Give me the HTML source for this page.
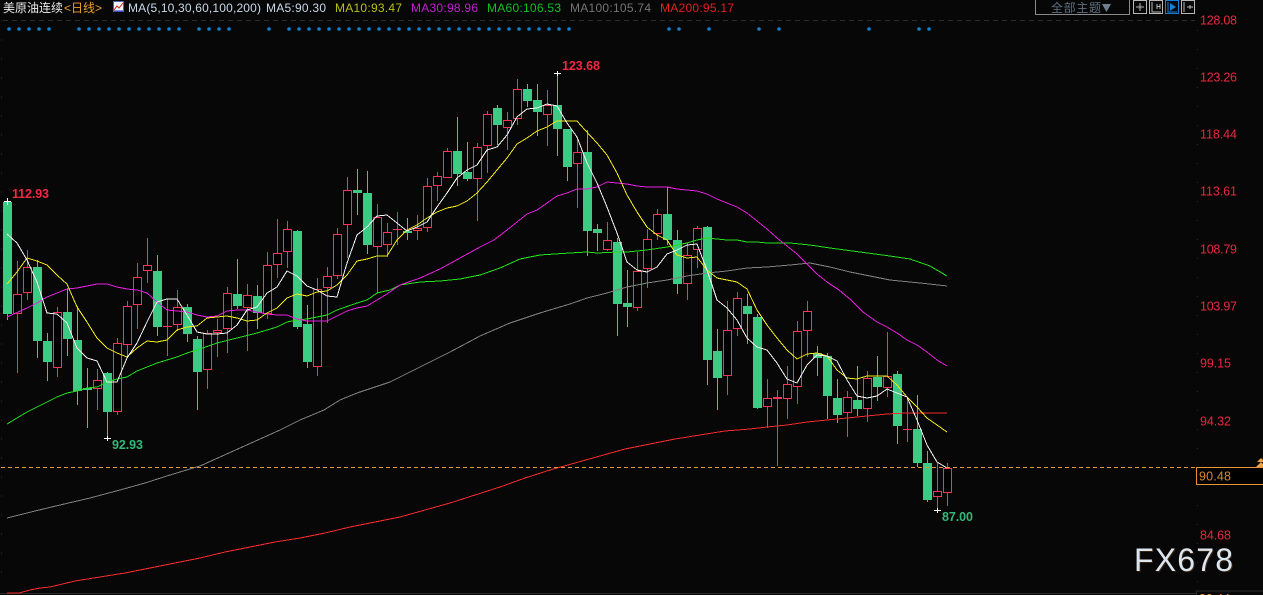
<!DOCTYPE html>
<html><head><meta charset="utf-8"><title>美原油连续</title>
<style>
html,body{margin:0;padding:0;background:#070707;width:1263px;height:595px;overflow:hidden}
svg{display:block;position:absolute;left:0;top:0}
text{font-family:"Liberation Sans","Noto Sans CJK SC",sans-serif}
polyline{shape-rendering:crispEdges}
</style></head><body>
<svg width="1263" height="595" viewBox="0 0 1263 595" xmlns="http://www.w3.org/2000/svg">
<rect width="1263" height="595" fill="#070707"/>
<!-- grid -->
<path d="M3 20.5H1195" stroke="#2c2c2c" stroke-dasharray="5 4" fill="none"/>
<path d="M1197.5 30V590" stroke="#2a2a2a" stroke-dasharray="1 18" fill="none"/>
<path d="M0 593.5H1196M1196.5 595V591H1263" stroke="#2b2b2b" fill="none"/>
<path d="M1.5 20V590" stroke="#1c1c1c" stroke-dasharray="2 17" fill="none"/>
<!-- signal dots -->
<path stroke="#1180d0" stroke-width="3.6" stroke-linecap="round" fill="none" d="M9 29h0M19 29h0M29 29h0M39 29h0M49 29h0M79 29h0M89 29h0M99 29h0M109 29h0M119 29h0M129 29h0M139 29h0M149 29h0M159 29h0M169 29h0M179 29h0M199 29h0M209 29h0M219 29h0M229 29h0M269 29h0M289 29h0M299 29h0M309 29h0M319 29h0M329 29h0M339 29h0M349 29h0M359 29h0M369 29h0M379 29h0M389 29h0M399 29h0M409 29h0M419 29h0M429 29h0M439 29h0M449 29h0M459 29h0M469 29h0M479 29h0M489 29h0M499 29h0M509 29h0M519 29h0M529 29h0M539 29h0M549 29h0M559 29h0M569 29h0M669 29h0M679 29h0M709 29h0M759 29h0M779 29h0M869 29h0M919 29h0M929 29h0"/>
<!-- green wicks -->
<path fill="none" stroke="#3bcb82" d="M7.5 201V320M37.5 260V358M47.5 333V381M67.5 288V356M77.5 306V405M87.5 368V428M107.5 372V437M157.5 255V336M187.5 304V342M197.5 336V410M237.5 259V309M257.5 285V329M297.5 230V329M307.5 305V368M357.5 169V215M367.5 171V254M407.5 218V240M457.5 117V186M467.5 142V181M497.5 105V145M527.5 84V107M537.5 84V136M557.5 73V156M567.5 129V181M587.5 130V256M597.5 224V251M617.5 238V336M627.5 270V327M667.5 187V245M677.5 230V294M707.5 226V385M717.5 329V410M747.5 294V344M757.5 314V409M817.5 346V376M827.5 353V419M837.5 379V423M857.5 366V416M877.5 356V401M897.5 371V444M917.5 395V467M927.5 451V502"/>
<!-- green bodies -->
<path fill="none" stroke="#3bcb82" stroke-width="9" d="M7.5 202V314M37.5 267V341M47.5 341V362M67.5 312V339M77.5 340V391M87.5 388V390M107.5 373V412M157.5 271V327M187.5 307V334M197.5 339V372M237.5 294V306M257.5 296V313M297.5 231V327M307.5 324V362M357.5 190V193M367.5 193V245M407.5 231V233M457.5 151V174M467.5 172V179M497.5 108V125M527.5 89V101M537.5 100V112M557.5 105V129M567.5 129V167M587.5 152V231M597.5 229V233M617.5 242V304M627.5 303V307M667.5 214V240M677.5 240V284M707.5 227V360M717.5 351V378M747.5 306V314M757.5 317V408M817.5 353V358M827.5 356V396M837.5 398V415M857.5 400V409M877.5 377V387M897.5 374V426M917.5 429V463M927.5 463V500"/>
<!-- red wicks -->
<path fill="none" stroke="#ff3352" d="M17.5 261V373M27.5 250V300M57.5 307V377M97.5 369V410M117.5 338V415M127.5 301V357M137.5 263V329M147.5 238V283M167.5 299V356M177.5 290V331M207.5 330V389M217.5 319V357M227.5 287V353M247.5 284V351M267.5 252V319M277.5 219V278M287.5 221V268M317.5 278V376M327.5 267V323M337.5 228V279M347.5 177V258M377.5 204V293M387.5 223V257M397.5 212V245M417.5 215V240M427.5 178V232M437.5 172V201M447.5 148V178M477.5 143V221M487.5 111V173M507.5 112V150M517.5 79V125M547.5 90V146M577.5 139V208M607.5 222V251M637.5 252V311M647.5 229V288M657.5 209V240M687.5 243V300M697.5 226V268M727.5 301V395M737.5 292V336M767.5 379V428M777.5 390V466M787.5 366V419M797.5 321V404M807.5 301V357M847.5 391V437M867.5 371V422M887.5 332V397M907.5 397V442M937.5 463V509M947.5 463V506"/>
<!-- red bodies outer -->
<path fill="none" stroke="#ff3352" stroke-width="9" d="M17.5 294V314M27.5 267V293M57.5 312V368M97.5 380V389M117.5 343V412M127.5 306V345M137.5 277V305M147.5 265V271M167.5 326V327M177.5 307V325M207.5 333V370M217.5 330V333M227.5 293V329M247.5 295V308M267.5 265V314M277.5 253V265M287.5 229V252M317.5 289V367M327.5 276V288M337.5 234V276M347.5 190V225M377.5 217V247M387.5 232V245M397.5 229V230M417.5 228V231M427.5 186V228M437.5 176V186M447.5 151V178M477.5 147V179M487.5 114V146M507.5 120V128M517.5 89V119M547.5 105V115M577.5 152V164M607.5 240V250M637.5 271V308M647.5 239V269M657.5 214V234M687.5 255V284M697.5 228V250M727.5 330V376M737.5 298V329M767.5 398V407M777.5 397V399M787.5 384V399M797.5 331V387M807.5 311V331M847.5 397V413M867.5 378V409M887.5 376V388M907.5 429V430M937.5 491V497M947.5 468V493"/>
<!-- red bodies hollow -->
<path fill="none" stroke="#000" stroke-width="7" d="M17.5 295V313M27.5 268V292M57.5 313V367M97.5 381V388M117.5 344V411M127.5 307V344M137.5 278V304M147.5 266V270M177.5 308V324M207.5 334V369M217.5 331V332M227.5 294V328M247.5 296V307M267.5 266V313M277.5 254V264M287.5 230V251M317.5 290V366M327.5 277V287M337.5 235V275M347.5 191V224M377.5 218V246M387.5 233V244M417.5 229V230M427.5 187V227M437.5 177V185M447.5 152V177M477.5 148V178M487.5 115V145M507.5 121V127M517.5 90V118M547.5 106V114M577.5 153V163M607.5 241V249M637.5 272V307M647.5 240V268M657.5 215V233M687.5 256V283M697.5 229V249M727.5 331V375M737.5 299V328M767.5 399V406M787.5 385V398M797.5 332V386M807.5 312V330M847.5 398V412M867.5 379V408M887.5 377V387M937.5 492V496M947.5 469V492"/>
<!-- MA200 -->
<polyline fill="none" stroke="#f52a2a" stroke-width="1" points="7,593 19,593 30,590 40,588 50,587 75,581 100,577 125,573 150,568 175,563 200,558 225,552 250,547 275,542 300,538 325,533 350,527 375,522 400,517 425,510 450,503 475,495 500,487 525,478 550,470 575,463 600,456 625,449 650,444 675,439 700,435 725,431 750,429 767,427 787,425 807,422 827,420 847,418 867,416 887,414 907,413 947,413"/>
<!-- MA100 -->
<polyline fill="none" stroke="#808080" stroke-width="1" points="7,518 35,511 60,505 90,498 120,490 145,483 170,475 200,466 220,457 240,448 260,439 280,430 300,420 324,410 340,400 357,393 390,382 420,367 450,352 480,336 510,323 540,313 570,304 587,298 607,293 627,287 647,283 667,280 687,276 707,273 727,271 747,268 767,267 790,265 810,263 830,267 850,272 870,276 890,280 920,283 947,286"/>
<!-- MA60 -->
<polyline fill="none" stroke="#22e018" stroke-width="1" points="7,424 17,418 27,412 37,407 47,402 57,397 67,393 77,391 87,388 97,387 107,382 117,379 127,377 137,371 147,367 157,363 167,360 177,357 187,353 197,350 217,343 237,338 257,333 277,327 287,322 297,320 307,319 317,317 327,315 337,310 357,303 367,300 377,293 390,290 400,285 420,282 440,281 460,279 480,275 500,268 520,259 540,255 570,253 587,252 597,253 617,252 627,252 647,250 667,247 687,243 697,240 707,238 717,239 727,240 737,240 747,242 757,242 767,243 790,243 810,245 830,248 860,252 890,256 910,259 930,266 947,276"/>
<!-- MA30 -->
<polyline fill="none" stroke="#e81ee0" stroke-width="1" points="7,317 27,308 37,303 47,297 57,293 67,289 77,288 87,286 97,284 107,284 117,287 127,289 137,290 147,293 157,302 167,310 177,311 187,312 197,315 207,317 217,316 227,311 237,310 247,310 257,312 267,314 277,315 287,315 297,319 307,321 317,321 327,321 337,316 347,311 357,308 367,306 377,300 387,294 400,285 420,278 440,269 460,258 480,247 494,240 507,230 517,222 527,214 537,210 547,203 557,196 567,193 577,189 587,189 597,187 607,182 617,183 627,184 637,186 647,187 667,187 677,189 687,190 697,191 707,194 717,199 727,203 737,207 747,213 757,221 767,229 777,238 787,246 797,254 807,264 817,274 827,282 839,290 851,300 863,312 877,322 887,327 897,333 907,340 917,345 927,352 937,360 947,366"/>
<!-- MA10 -->
<polyline fill="none" stroke="#f0e818" stroke-width="1" points="7,284 17,272 27,258 37,261 47,265 57,275 67,284 77,307 87,322 97,338 107,348 117,353 127,357 137,348 147,341 157,342 167,340 177,330 187,327 197,326 207,318 217,317 227,316 237,318 247,321 257,320 267,313 277,308 287,298 297,294 307,296 317,292 327,291 337,285 347,275 357,261 367,259 377,256 387,256 397,240 407,230 417,225 427,218 437,212 447,208 457,206 467,201 477,193 487,182 497,170 507,158 517,144 527,138 537,131 547,127 557,121 567,121 577,121 585,130 597,143 607,155 617,173 627,195 637,212 647,227 657,235 667,240 677,255 687,258 697,257 707,270 717,278 727,280 737,282 747,289 757,310 767,325 777,338 787,350 797,359 807,354 817,353 827,356 837,370 847,378 857,379 867,376 877,376 887,376 897,385 907,397 917,407 927,418 937,425 947,432"/>
<!-- MA5 -->
<polyline fill="none" stroke="#f4f4f4" stroke-width="1" points="7,234 17,243 27,260 37,282 47,313 57,314 67,323 77,348 87,358 97,361 107,382 117,382 127,358 137,343 147,322 157,302 167,299 177,299 187,315 197,332 207,334 217,334 227,333 237,325 247,310 257,307 267,293 277,287 287,271 297,276 307,286 317,290 327,296 337,297 347,263 357,235 367,227 377,216 387,215 397,223 407,231 417,227 427,222 437,207 447,193 457,178 467,170 477,165 487,150 497,147 507,135 517,117 527,109 537,108 547,104 557,106 567,123 577,137 587,163 597,183 607,207 617,233 627,262 637,270 647,272 657,267 667,254 677,250 687,245 697,244 707,270 717,300 727,308 737,320 747,338 757,347 767,350 777,363 787,379 797,383 807,365 817,355 827,356 837,361 847,380 857,396 867,398 877,396 887,389 897,393 907,397 917,420 927,445 937,462 947,468"/>
<!-- current price line -->
<path d="M1 467.5H1196" stroke="#e8963a" stroke-dasharray="4 3" fill="none"/>
<rect x="1196.5" y="467.5" width="70" height="17" fill="#000" stroke="#e8963a"/>
<path d="M1256 467h10l-5-5zM1257 462h8l-4-4z" fill="#f0a040"/>
<text x="1199" y="480.5" font-size="12.5" fill="#d98a30" textLength="32" lengthAdjust="spacing">90.48</text>
<!-- extremes markers -->
<path fill="none" stroke="#fff" d="M4 201.5h7M7.5 198v7M104 438.5h7M107.5 436v5M554 73.5h7M557.5 71v5M934 510.5h7M937.5 508v5"/>
<text x="12" y="198" font-size="12.5" font-weight="bold" fill="#f3283f" textLength="37" lengthAdjust="spacing">112.93</text>
<text x="112" y="449" font-size="12.5" font-weight="bold" fill="#32b878" textLength="31" lengthAdjust="spacing">92.93</text>
<text x="562" y="70" font-size="12.5" font-weight="bold" fill="#f3283f" textLength="38" lengthAdjust="spacing">123.68</text>
<text x="942" y="521" font-size="12.5" font-weight="bold" fill="#32b878" textLength="31" lengthAdjust="spacing">87.00</text>
<!-- axis -->
<g font-size="12.5" fill="#e8283f">
<text x="1200" y="24.5" textLength="37" lengthAdjust="spacing">128.08</text>
<text x="1200" y="81.5" textLength="37" lengthAdjust="spacing">123.26</text>
<text x="1200" y="138.5" textLength="37" lengthAdjust="spacing">118.44</text>
<text x="1200" y="195.5" textLength="37" lengthAdjust="spacing">113.61</text>
<text x="1200" y="253.5" textLength="37" lengthAdjust="spacing">108.79</text>
<text x="1200" y="310.5" textLength="37" lengthAdjust="spacing">103.97</text>
<text x="1200" y="367.5" textLength="31" lengthAdjust="spacing">99.15</text>
<text x="1200" y="425.5" textLength="31" lengthAdjust="spacing">94.32</text>
<text x="1200" y="539.5" textLength="31" lengthAdjust="spacing">84.68</text>
</g>
<text x="1199" y="603" font-size="12.5" fill="#f09020" textLength="31" lengthAdjust="spacing">80.44</text>
<!-- header -->
<text x="3" y="12" font-size="12" fill="#ececec" textLength="60" lengthAdjust="spacing">美原油连续</text>
<text x="64" y="12" font-size="12" fill="#e8a030">&lt;日线&gt;</text>
<rect x="113.5" y="1.5" width="10" height="10" fill="#f4f4ff" stroke="#5060c0"/>
<path d="M114 10l3-4 2 2 4-5" stroke="#d02020" fill="none"/>
<path d="M114 11h9" stroke="#2030b0"/>
<text x="128" y="12" font-size="12" fill="#c8d8ea" textLength="133" lengthAdjust="spacing">MA(5,10,30,60,100,200)</text>
<text x="266" y="12" font-size="12" fill="#c8d8ea" textLength="60" lengthAdjust="spacing">MA5:90.30</text>
<text x="335" y="12" font-size="12" fill="#b8c010" textLength="67" lengthAdjust="spacing">MA10:93.47</text>
<text x="411" y="12" font-size="12" fill="#c020d0" textLength="67" lengthAdjust="spacing">MA30:98.96</text>
<text x="487" y="12" font-size="12" fill="#10c020" textLength="74" lengthAdjust="spacing">MA60:106.53</text>
<text x="570" y="12" font-size="12" fill="#757575" textLength="81" lengthAdjust="spacing">MA100:105.74</text>
<text x="660" y="12" font-size="12" fill="#e02020" textLength="74" lengthAdjust="spacing">MA200:95.17</text>
<!-- top right -->
<rect x="1035.5" y="-2" width="94" height="16.5" fill="none" stroke="#8a8a8a"/>
<text x="1051" y="12" font-size="12" fill="#5f7080" textLength="50" lengthAdjust="spacing">全部主题</text>
<path d="M1102 4h9l-4.5 8z" fill="#6f7f8f"/>
<g fill="none" stroke="#b8b8b8">
<rect x="1133.5" y="0.5" width="13" height="13"/>
<path d="M1140 3v2M1140 9v2M1136 7h2M1142 7h2M1139 6h2v2h-2z"/>
<rect x="1149.5" y="0.5" width="13" height="13"/>
<path d="M1152 2v10h9M1157 4v5M1160 4v5M1157 6.500h3"/>
<rect x="1165.500" y="0.500" width="13" height="13" stroke="#1480d8"/>
<path d="M1168 2v10h9" stroke="#1480d8"/>
<path d="M1170 3l6 4-6 4z" fill="#1480d8" stroke="none"/>
<rect x="1181.500" y="0.500" width="13" height="13"/>
<path d="M1184 2v10M1187 7h6M1190 5v4" stroke="#b8b8b8"/>
</g>
<!-- watermark -->
<text x="1135" y="572" font-size="32" fill="#3a2410" textLength="99" lengthAdjust="spacing">FX678</text>
<text x="1134" y="571" font-size="32" fill="#dce6f0" textLength="99" lengthAdjust="spacing">FX678</text>
</svg>
</body></html>
